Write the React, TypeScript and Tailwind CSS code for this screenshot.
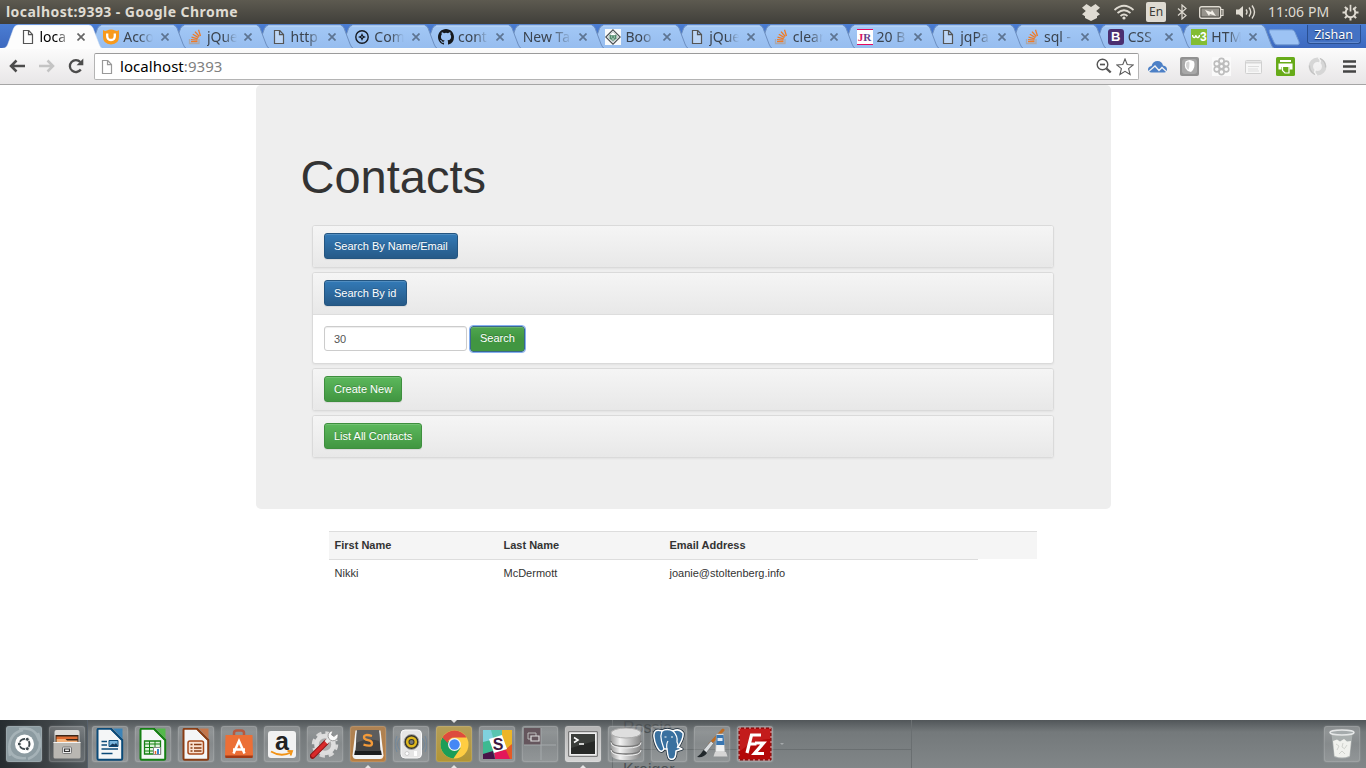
import React from "react";

type Kids = { children?: React.ReactNode };

const Svg = ({ w = 16, h = 16, vb, className = "", children }: Kids & { w?: number; h?: number; vb?: string; className?: string }) => (
  <svg width={w} height={h} viewBox={vb ?? `0 0 ${w} ${h}`} fill="none" className={`block shrink-0 ${className}`}>
    {children}
  </svg>
);

/* ---------- favicons ---------- */

const PageIcon = ({ color = "#555" }: { color?: string }) => (
  <Svg>
    <path d="M3.500 1.500h5.300l3.700 4v9h-9zM8.500 1.500v4.200h4" stroke={color} strokeWidth="1.200" fill="#ffffff55" />
  </Svg>
);
const UdemyIcon = () => (
  <Svg>
    <path d="M0 1q2 1.500 4 .5Q8-.5 12 1.500q2 1 4-.5v7q0 7-8 7.500Q0 15 0 8z" fill="#f89a1c" />
    <path d="M4.200 4.500V7q0 4 3.800 4t3.800-4V4.500" stroke="#fff" strokeWidth="2.300" />
  </Svg>
);
const StackIcon = () => (
  <Svg>
    <path d="M2.500 10v4.500h9.500V10" stroke="#a9a9ae" strokeWidth="1.300" />
    <path d="M4 12.700h6.500M4 10.600l6.500.5M4.500 8.100l6.300 1.700M5.800 5.300l5.700 3.300M8 2.600l4.300 4.900M11.500.8l2 6.200" stroke="#ee7b28" strokeWidth="1.300" />
  </Svg>
);
const CompassIcon = () => (
  <Svg>
    <circle cx="8" cy="8" r="6.200" stroke="#151a22" strokeWidth="1.400" />
    <path d="M8 4l1.200 2.800L12 8 9.200 9.200 8 12 6.800 9.200 4 8l2.800-1.200z" fill="#151a22" />
    <circle cx="8" cy="8" r=".8" fill="#9cc2f2" />
  </Svg>
);
const GithubIcon = () => (
  <Svg>
    <path
      fill="#16191d"
      d="M8 0C3.580 0 0 3.580 0 8c0 3.540 2.290 6.530 5.470 7.590.4.070.55-.17.55-.38v-1.490c-2.010.37-2.530-.49-2.690-.94-.09-.23-.48-.94-.82-1.130-.28-.15-.68-.52-.01-.53.63-.01 1.080.58 1.230.82.72 1.210 1.870.87 2.330.66.07-.52.28-.87.51-1.070-1.780-.2-3.640-.89-3.640-3.950 0-.87.31-1.590.82-2.150-.08-.2-.36-1.020.08-2.120 0 0 .67-.21 2.200.82a7.600 7.600 0 0 1 4 0c1.530-1.040 2.200-.82 2.200-.82.44 1.100.16 1.920.08 2.120.51.56.82 1.270.82 2.150 0 3.070-1.870 3.750-3.650 3.950.29.25.54.73.54 1.480v2.200c0 .21.15.46.55.38A8 8 0 0 0 16 8c0-4.420-3.580-8-8-8z"
    />
  </Svg>
);
const DiamondIcon = () => (
  <Svg>
    <path d="M0 0h16v16H0z" fill="#f7f9fa" />
    <path d="M8 .8L15.200 8 8 15.200.8 8z" fill="#fff" stroke="#4b5054" strokeWidth="1.200" />
    <path d="M8 2.800L13.200 8 8 13.200 2.800 8z" stroke="#9aa" strokeWidth=".6" />
    <path d="M4.500 5.500l1.500.8h4l1.500-.8v4L8 12 4.500 9.500z" fill="#4f8a6c" />
    <path d="M6 8h1.200M8.800 8H10M6.800 10h2.400" stroke="#fff" strokeWidth=".8" />
  </Svg>
);
const JRIcon = () => (
  <span className="flex h-4 w-4 items-center justify-center border-y border-[#e5095f] bg-white pt-[1px] font-['Liberation_Serif',serif] text-[11px] leading-none font-bold">
    <span className="text-[#e0115f]">J</span>
    <span className="text-[#65418b]">R</span>
  </span>
);
const BootstrapIcon = () => (
  <span className="flex h-4 w-4 items-center justify-center rounded-[3px] bg-[#4b2e6f] font-['Liberation_Sans',sans-serif] text-[13px] leading-none font-bold text-white">B</span>
);
const W3Icon = () => (
  <span className="flex h-4 w-4 items-center justify-center bg-[#83bd34] font-['Liberation_Sans',sans-serif] text-[12px] leading-none font-bold text-white">
    <Svg w={8} h={5}>
      <path d="M.5 1q.5 3 2 2.500T4 1q.5 3 2 2.500T7.500 1" stroke="#fff" strokeWidth="1.400" />
    </Svg>
    3
  </span>
);

/* ---------- tabs ---------- */

const tabs: { label: string; icon?: React.ReactNode }[] = [
  { label: "loca", icon: <PageIcon /> },
  { label: "Acco", icon: <UdemyIcon /> },
  { label: "jQue", icon: <StackIcon /> },
  { label: "http", icon: <PageIcon /> },
  { label: "Com", icon: <CompassIcon /> },
  { label: "cont", icon: <GithubIcon /> },
  { label: "New Ta" },
  { label: "Boo", icon: <DiamondIcon /> },
  { label: "jQue", icon: <PageIcon /> },
  { label: "clear", icon: <StackIcon /> },
  { label: "20 B", icon: <JRIcon /> },
  { label: "jqPa", icon: <PageIcon /> },
  { label: "sql -", icon: <StackIcon /> },
  { label: "CSS", icon: <BootstrapIcon /> },
  { label: "HTM", icon: <W3Icon /> },
];

const Tab = ({ label, icon, active, z }: { label: string; icon?: React.ReactNode; active: boolean; z: number }) => (
  <div className="relative -mr-[16.3px] h-[24px] w-[100px] shrink-0" style={{ zIndex: z }}>
    <svg width="100" height="25" viewBox="0 0 100 25" className="absolute inset-0">
      <defs>
        <linearGradient id="tabFill" x1="0" y1="0" x2="0" y2="1">
          <stop offset="0" stopColor="#a3c8f6" />
          <stop offset="1" stopColor="#96bdef" />
        </linearGradient>
      </defs>
      <path
        d="M0 24.500Q4 24.500 5.500 21L11.500 4.500Q13 1 16 1H87Q89.500 1 91 4L97 20Q98.500 24.500 101 24.500"
        fill={active ? "#fdfdfd" : "url(#tabFill)"}
        stroke={active ? "#dfe8f5" : "#6d8fc0"}
        strokeWidth={active ? 0.5 : 1}
      />
      {!active && <path d="M15 2H88" stroke="#c1dbfb" />}
    </svg>
    <div className={`relative flex h-full items-center pt-[1px] ${icon ? "pl-[17.500px]" : "pl-[18.500px]"}`}>
      {icon && <div className="mr-[4px]">{icon}</div>}
      <div
        className={`font-['Noto_Sans',sans-serif] text-[14px] leading-[20px] whitespace-nowrap [mask-image:linear-gradient(to_right,black_55%,transparent)] ${icon ? "w-[30px]" : "w-[49px]"} ${active ? "text-black" : "text-[#3b444f]"}`}
      >
        {label}
      </div>
      <Svg w={8} h={8} className={icon ? "ml-[7.500px]" : "ml-[7px]"}>
        <path d="M.5.5l7 7M7.500.5l-7 7" stroke={active ? "#666" : "#5d7492"} strokeWidth="1.700" />
      </Svg>
    </div>
  </div>
);

/* ---------- title bar ---------- */

const TitleBar = () => (
  <div className="flex h-[24px] shrink-0 items-center bg-linear-to-b from-[#5d5a50] to-[#403f3a] pl-[6px] font-['Noto_Sans',sans-serif] text-[#dfdbd2]">
    <div className="text-[14px] leading-[20px] font-bold tracking-[0.44px] whitespace-nowrap">localhost:9393 - Google Chrome</div>
    <div className="ml-auto flex items-center pr-[7px]">
      <Svg w={18} h={17}>
        <path d="M4.500 0L9 3 13.500 0 18 3.800 14.200 7 18 10.200l-3 2V14L9 17l-6-3v-1.800l-3-2L3.800 7 0 3.800z" fill="#dfdbd2" />
      </Svg>
      <Svg w={22} h={16} className="ml-[13px]">
        <path d="M1.500 6Q11-2.500 20.500 6M4.500 9Q11 3.500 17.500 9M7.500 12Q11 9 14.500 12" stroke="#dfdbd2" strokeWidth="1.700" />
        <circle cx="11" cy="14" r="1.600" fill="#dfdbd2" />
      </Svg>
      <div className="ml-[11px] flex h-5 w-5 items-center justify-center rounded-[2px] bg-[#dfdbd2] text-[12px] leading-none text-[#3c3b37]">En</div>
      <Svg w={10} h={16} className="ml-[11px]">
        <path d="M1 4.500l8 7L5 15V1l4 3.500-8 7" stroke="#dfdbd2" strokeWidth="1.200" />
      </Svg>
      <Svg w={25} h={13} className="ml-[12px]">
        <rect x=".7" y=".7" width="21" height="11.600" rx="2" stroke="#dfdbd2" strokeWidth="1.400" />
        <path d="M2.500 2.500h17.500v8H2.500z" fill="#96938b" />
        <path d="M22 3.500h2v6h-2" stroke="#dfdbd2" strokeWidth="1.200" />
        <path d="M6 4l6 2 1-2 4 6-6-2-1 2z" fill="#f3f0e8" />
      </Svg>
      <Svg w={21} h={16} className="ml-[11px]">
        <path d="M1 5.500h3L8 2v12l-4-3.500H1z" fill="#dfdbd2" />
        <path d="M11 5.500q2 2.500 0 5M14 3.500q3.500 4.500 0 9M17 1.500q5 6.500 0 13" stroke="#dfdbd2" strokeWidth="1.400" />
      </Svg>
      <div className="ml-[12px] w-[62px] text-[14px] leading-[20px] tracking-[0.08px] whitespace-nowrap">11:06 PM</div>
      <Svg w={17} h={17} className="ml-[12px]">
        <path d="M6 4.400a4.800 4.800 0 1 0 5 0" stroke="#dfdbd2" strokeWidth="2" />
        <path d="M8.500.8v6.700" stroke="#dfdbd2" strokeWidth="1.700" />
        <path d="M.5 8.500H4M13 8.500h3.500M8.500 13v3.500M2.900 2.900l2.300 2.300M14.100 2.900l-2.300 2.300M2.900 14.100l2.300-2.300M14.100 14.100l-2.300-2.300" stroke="#dfdbd2" strokeWidth="2" />
      </Svg>
    </div>
  </div>
);

const TabStrip = () => (
  <div className="flex h-[24px] shrink-0 overflow-hidden bg-linear-to-b from-[#4a7dd3] to-[#3d69bf] pl-[2px]">
    {tabs.map((t, i) => (
      <Tab key={i} label={t.label} icon={t.icon} active={i === 0} z={30 - i} />
    ))}
    <Svg w={33} h={17} className="mt-[5px] ml-[10px]">
      <path d="M2 .8h22q2 0 3 2.500l4 9.500q1 3-1.500 3H9q-2 0-3-2.500L1.500 3.500Q.5.800 2 .8z" fill="#9dc3f4" stroke="#6f97d1" />
    </Svg>
    <div className="mt-[1px] ml-[6px] flex h-[19px] w-[54px] items-center justify-center rounded-b-[3px] border border-t-0 border-[#294f91] bg-[#4472c4] pt-[3px] font-['Noto_Sans',sans-serif] text-[12.5px] leading-none text-white shadow-[inset_0_-1px_0_#6089d0] [text-shadow:0_1px_1px_#152d5a]">
      Zishan
    </div>
  </div>
);

/* ---------- toolbar ---------- */

const Toolbar = () => (
  <div className="flex h-[37px] shrink-0 items-center border-t border-b border-t-[#fdfdfd] border-b-[#a5a5a5] bg-linear-to-b from-[#fbfbfb] to-[#e8e6e7] pl-[9px]">
    <Svg w={17} h={14} className="mb-[1px]">
      <path d="M16 7H2.500M7.500 1.500L2 7l5.500 5.500" stroke="#4c4c4c" strokeWidth="2.500" />
    </Svg>
    <Svg w={16} h={14} className="mb-[1px] ml-[13px]">
      <path d="M0 7h13M8.500 1.500L14 7l-5.500 5.500" stroke="#c4c4c4" strokeWidth="2.500" />
    </Svg>
    <Svg w={16} h={16} className="mb-[1px] ml-[13px]">
      <path d="M12.800 11.500a6 6 0 1 1-.5-7.500" stroke="#4c4c4c" strokeWidth="2.300" />
      <path d="M15.300.5v6.700H8.600z" fill="#4c4c4c" />
    </Svg>
    <div className="ml-[10px] flex h-[27px] w-[1045px] items-center rounded-[2px] border border-[#b4b4b4] border-t-[#9b9b9b] bg-white pl-[4px]">
      <PageIcon color="#999" />
      <div className="-mt-[2px] ml-[5px] font-['Noto_Sans',sans-serif] text-[15px] leading-[22px] tracking-[0.05px] whitespace-nowrap text-[#808080]">
        <span className="text-black">localhost</span>:9393
      </div>
      <Svg w={16} h={16} className="mb-[2px] ml-auto">
        <circle cx="6.500" cy="6.500" r="5.300" stroke="#555" strokeWidth="1.400" />
        <path d="M4 6.500h5" stroke="#555" strokeWidth="1.700" />
        <path d="M10.500 10.500l4.200 4" stroke="#555" strokeWidth="2.400" />
      </Svg>
      <Svg w={18} h={18} className="mr-[4px] ml-[4px]">
        <path d="M9 1l2.200 5.500 6 .4-4.600 3.800 1.500 5.800L9 13.300l-5.100 3.200 1.500-5.800L.8 6.900l6-.4z" stroke="#5a5a5a" strokeWidth="1.100" />
      </Svg>
    </div>
    <Svg w={19} h={14} className="ml-[9px]">
      <path d="M3.500 12.500Q0 12.500 0 9.500T3.500 6Q5 1 9.500 1T15 5.500Q19 6 19 9.500t-3.500 3z" fill="#4d80c6" />
      <path d="M0 12l7-6 4 4.500L14 7.500l5 4.500" stroke="#f2f2f2" strokeWidth="1.300" />
    </Svg>
    <Svg w={19} h={19} className="ml-[13px]">
      <rect width="19" height="19" rx="2" fill="#919191" />
      <rect x="2" y="2" width="15" height="15" rx="3" fill="#a8a8a8" />
      <path d="M5.500 4.500q4-3 8.500 0 2 6-3 10.500Q2.500 13 5.500 4.500z" fill="#fff" />
      <path d="M6.500 5.500q3-2 3 .5 0 4-1 7Q5 10 6.500 5.500z" fill="#d4d4d4" />
    </Svg>
    <Svg w={19} h={19} className="ml-[13px]">
      <path d="M0 0h19v19H0z" fill="#fafafa" />
      <g stroke="#bdbdbd" strokeWidth="1.600">
        <circle cx="9.500" cy="9.500" r="2.200" />
        <circle cx="9.500" cy="4" r="2.600" />
        <circle cx="14.200" cy="6.700" r="2.600" />
        <circle cx="14.200" cy="12.300" r="2.600" />
        <circle cx="9.500" cy="15" r="2.600" />
        <circle cx="4.800" cy="12.300" r="2.600" />
        <circle cx="4.800" cy="6.700" r="2.600" />
      </g>
    </Svg>
    <Svg w={17} h={14} className="ml-[14px]">
      <rect x=".5" y=".5" width="16" height="13" rx="1" fill="#f7f7f7" stroke="#d0d0d0" />
      <path d="M1 2.500h15" stroke="#d7d7d7" strokeWidth="2" />
      <path d="M3 6.500h11M3 9h10M3 11h11" stroke="#ddd" />
    </Svg>
    <Svg w={19} h={19} className="ml-[14px]">
      <rect width="19" height="19" rx="1.500" fill="#67ab19" />
      <path d="M4 3h11v2H4zM2.500 6.500h14v6h-3V10h-8v2.500h-3z" fill="#fff" />
      <path d="M6.500 9.500h6.500V16H9l-2.500-2.500z" fill="#67ab19" stroke="#fff" strokeWidth="1.200" />
    </Svg>
    <Svg w={19} h={19} className="ml-[13px]">
      <circle cx="9.500" cy="9.500" r="6.700" stroke="#d6d6d6" strokeWidth="4.500" />
      <path d="M10 .5q4 3 1 6.500M9 18.500q-4-3-1-6.500" stroke="#f4f4f4" strokeWidth="1.500" />
      <path d="M12 1.500q6 3 5.500 9M7 17.500q-5.500-3-5.500-9" stroke="#c2c2c2" strokeWidth="1.200" />
    </Svg>
    <Svg w={13} h={13} className="ml-[16px]">
      <path d="M0 1.500h13M0 6.500h13M0 11.500h13" stroke="#444" strokeWidth="2.700" />
    </Svg>
  </div>
);

/* ---------- page ---------- */

const Btn = ({ kind, children }: Kids & { kind: "blue" | "green" | "focus" }) => (
  <button
    className={`h-[26px] shrink-0 rounded-[3px] border pr-[9.200px] pl-[9.500px] text-[11px] leading-[15px] whitespace-nowrap text-white shadow-[inset_0_1px_0_rgba(255,255,255,0.15),0_1px_1px_rgba(0,0,0,0.075)] [text-shadow:0_-1px_0_rgba(0,0,0,0.2)] ${
      kind === "blue"
        ? "border-[#245580] bg-linear-to-b from-[#337ab7] to-[#265a88]"
        : kind === "green"
          ? "border-[#3e8f3e] bg-linear-to-b from-[#5cb85c] to-[#419641]"
          : "border-[#38688d] bg-linear-to-b from-[#4fa64f] to-[#419641] to-50% pb-[2px] outline-1 outline-[#86b0f0]"
    }`}
  >
    {children}
  </button>
);

const Panel = ({ head, children }: Kids & { head: React.ReactNode }) => (
  <section className="overflow-hidden rounded-[3px] border border-[#dadada] bg-white shadow-[0_1px_2px_rgba(0,0,0,0.05)]">
    <div className="flex h-[41px] items-start bg-linear-to-b from-[#f5f5f5] to-[#e8e8e8] pt-[7px] pl-[11px]">{head}</div>
    {children}
  </section>
);

const Page = () => (
  <main className="flex min-h-0 flex-1 flex-col items-center bg-white font-['Liberation_Sans',Arial,sans-serif] text-[11px] text-[#333]">
    <div className="h-[424px] w-[855px] shrink-0 rounded-[5px] bg-[#eee] pt-[66px] pr-[57px] pl-[45px]">
      <h1 className="h-[52px] text-[47px] leading-[52px]">Contacts</h1>
      <div className="mt-[22px] ml-[11px] flex flex-col gap-[4px]">
        <Panel head={<Btn kind="blue">Search By Name/Email</Btn>} />
        <Panel head={<Btn kind="blue">Search By id</Btn>}>
          <div className="flex h-[49px] items-start gap-[3px] border-t border-[#ddd] pt-[11px] pl-[11px]">
            <input
              defaultValue="30"
              className="h-[25px] w-[143px] rounded-[3px] border border-[#ccc] bg-white px-[9.500px] pt-[1px] text-[11px] text-[#555] shadow-[inset_0_1px_1px_rgba(0,0,0,0.075)]"
            />
            <Btn kind="focus">Search</Btn>
          </div>
        </Panel>
        <Panel head={<Btn kind="green">Create New</Btn>} />
        <Panel head={<Btn kind="green">List All Contacts</Btn>} />
      </div>
    </div>
    <div className="mt-[22px] grid w-[708px] grid-cols-[169px_166px_314px_59px] leading-[15px]">
      {["First Name", "Last Name", "Email Address", ""].map((t, i) => (
        <div key={i} className={`border-t border-t-[#ddd] bg-[#f5f5f5] pt-[6px] pl-[5.500px] font-bold ${i < 3 ? "h-[29px] border-b border-b-[#ddd]" : "h-[28px]"}`}>
          {t}
        </div>
      ))}
      {["Nikki", "McDermott", "joanie@stoltenberg.info"].map((t) => (
        <div key={t} className="pt-[6px] pl-[5.500px]">
          {t}
        </div>
      ))}
    </div>
  </main>
);

/* ---------- dock ---------- */

const Doc = ({ c, light, children }: Kids & { c: string; light: string }) => (
  <Svg w={28} h={33}>
    <path d="M1.500 2q0-1.200 1.200-1.200H15L26.200 12v18.500q0 1.200-1.200 1.200H2.700q-1.200 0-1.200-1.200z" fill="#f4f6f7" stroke={c} strokeWidth="2" />
    <path d="M17 .5h9.500V11z" fill={light} />
    <path d="M15 1l11 11" stroke={c} strokeWidth="1.500" />
    {children}
  </Svg>
);

const Ubuntu = () => (
  <Svg w={34} h={34}>
    <path d="M3 29Q-1 7 16 3M31 6Q38 25 21 32M12 2Q29-1 32 14M2 19q2 14 17 12" stroke="#d3dce0" strokeWidth="2.500" opacity=".35" />
    <circle cx="17.500" cy="17" r="9.500" fill="#fff" />
    <circle cx="17.500" cy="17" r="5" stroke="#3d474c" strokeWidth="2" />
    <g fill="#3d474c" stroke="#fff">
      <circle cx="12.300" cy="17" r="2" />
      <circle cx="20.300" cy="12.300" r="2" />
      <circle cx="20.300" cy="21.700" r="2" />
    </g>
  </Svg>
);
const Files = () => (
  <Svg w={28} h={31}>
    <path d="M1.500 3q0-2 2-2h21q2 0 2 2v12h-25z" fill="#dddbd7" />
    <path d="M2.500 6h23v9h-23z" fill="#3c2618" />
    <path d="M3.500 7.500h21v2.500h-21z" fill="#df6c31" />
    <path d="M3.500 10h9l1.500 1.500h10.500V15h-21z" fill="#f4b27a" />
    <path d="M.5 13h27v15q0 1.500-1.500 1.500H2Q.5 29.500.5 28z" fill="#b9b7b2" />
    <path d="M.5 13.500h27" stroke="#f2f2f2" />
    <rect x="9.500" y="18" width="9" height="6.500" rx="1" fill="#eee" stroke="#777" />
    <path d="M11.500 20h5v2.500h-5z" stroke="#333" strokeWidth="1.200" />
  </Svg>
);
const Writer = () => (
  <Doc c="#0b4a78" light="#3b83b8">
    <path d="M5.500 13.500h5.500M5.500 17h5.500M5.500 21H22M5.500 25.500h11" stroke="#0b4a78" strokeWidth="1.700" />
    <path d="M13 12.500h9v6h-9z" fill="#79b5dd" stroke="#0b4a78" />
    <path d="M13.500 18l3-2.500 2 1 1.500-1.500 2 3z" fill="#173a5a" />
  </Doc>
);
const Calc = () => (
  <Doc c="#148013" light="#54b94b">
    <path d="M5.500 13h16v13h-16z" fill="#dbf3d8" stroke="#148013" strokeWidth="1.300" />
    <path d="M5.500 16h16M5.500 19.500h16M5.500 23h16M10.500 13v13M16 13v13" stroke="#148013" />
    <path d="M14.500 19.500h7v7h-7z" fill="#fff" stroke="#888" />
    <path d="M16.500 26v-3" stroke="#e76b28" strokeWidth="1.500" />
    <path d="M19 26v-5" stroke="#257bc5" strokeWidth="1.800" />
  </Doc>
);
const Impress = () => (
  <Doc c="#893d14" light="#c5764a">
    <rect x="6" y="13" width="15.500" height="13" rx="2" fill="#f9e0cf" stroke="#a6481a" strokeWidth="1.500" />
    <path d="M8.500 16.500h2M8.500 20h2M8.500 23h2M12 16.500h7.500M12 20h7.500M12 23h7.500" stroke="#893d14" strokeWidth="1.600" />
  </Doc>
);
const Software = () => (
  <Svg w={28} h={30}>
    <path d="M9 10V4q0-2.500 3-2.500h4q3 0 3 2.500v6" stroke="#b9573c" strokeWidth="2.500" />
    <path d="M.5 6h27l.5 21H0z" fill="#ec6f36" />
    <path d="M0 26.500h28l-.5 2.500H.5z" fill="#a33b16" />
    <path d="M8.500 24.500L14 12l5.500 12.500M8 20.500h12" stroke="#fff" strokeWidth="2.500" />
  </Svg>
);
const Amazon = () => (
  <span className="flex h-[27px] w-[28px] flex-col items-center rounded-[3px] bg-[#f2f2f2] font-['Liberation_Sans',sans-serif] text-[25px] leading-[20px] font-bold text-[#222]">
    <span className="h-[19px]">a</span>
    <Svg w={26} h={7}>
      <path d="M2 1.500q10 6 20 1M18.500 1l4.500.2-1.500 4.300" stroke="#f29316" strokeWidth="1.900" />
    </Svg>
  </span>
);
const Settings = () => (
  <Svg w={30} h={30}>
    <circle cx="15" cy="15.500" r="11" stroke="#d8d8d8" strokeWidth="4.500" strokeDasharray="5 3.640" />
    <circle cx="15" cy="15.500" r="8.500" stroke="#dedede" strokeWidth="4.500" fill="#aaa" />
    <path d="M2.500 27L16 13.500" stroke="#8c1414" strokeWidth="5.500" strokeLinecap="round" />
    <path d="M3 26.500L16 13.500" stroke="#d92a2a" strokeWidth="3.800" strokeLinecap="round" />
    <path d="M16 13.500l4.500-4.500" stroke="#e8e8e8" strokeWidth="4" />
    <path d="M27.500 4.500a5 5 0 1 1-4.500-2.700l-1.500 4 2.500 1.700z" fill="#fafafa" stroke="#888" strokeWidth=".8" />
  </Svg>
);
const Sublime = () => (
  <Svg w={32} h={32}>
    <path d="M3.500 2.500h25l3 25Q31 31 28 31H4Q1 31 .5 27.500z" fill="#f3f3f3" />
    <path d="M3 22.500h26l.8 4.500H2.200z" fill="#1d1d1d" />
    <path d="M5 2h22l1.500 21h-25z" fill="#444" />
    <path d="M5 2h22l.8 11Q15 9 4.200 15z" fill="#5d5d5d" />
    <path d="M20 8q-8-2.500-8 1.300 0 2.200 4 2.900t4 3.200q0 3.600-8.500 1.300" stroke="#f39a39" strokeWidth="2.300" />
  </Svg>
);
const Speaker = () => (
  <Svg w={32} h={32}>
    <path d="M5 10Q0 16 5 22M2 8q-4 8 0 16M27 10q5 6 0 12M30 8q4 8 0 16" stroke="#6485a5" opacity=".6" />
    <rect x="6" y="2" width="20.500" height="28" rx="4" fill="#e6e6e6" stroke="#fafafa" />
    <circle cx="16.500" cy="14" r="7.500" fill="#37362f" stroke="#aaa" />
    <circle cx="16.500" cy="14" r="4.300" stroke="#dfb81d" strokeWidth="2.500" />
    <circle cx="16.500" cy="14" r="2" fill="#777" />
    <circle cx="12" cy="25.500" r="2" fill="#fff" stroke="#ccc" />
    <rect x="19" y="23" width="3" height="5" fill="#fff" />
  </Svg>
);
const ChromeLogo = () => (
  <Svg w={29} h={29}>
    <circle cx="14.500" cy="14.500" r="14" fill="#ffcd42" />
    <path d="M2.400 7.500a14 14 0 0 0 11 21L20.600 18 14.500 14.500z" fill="#1c9e58" />
    <path d="M2.400 7.500A14 14 0 0 1 26.600 7.500H14.500A7 7 0 0 0 7.700 13z" fill="#dd4b3e" />
    <circle cx="14.500" cy="14.500" r="6.500" fill="#f3f3f3" />
    <circle cx="14.500" cy="14.500" r="5.200" fill="#4487f5" />
  </Svg>
);
const Slack = () => (
  <Svg w={29} h={29}>
    <path d="M0 0h29v29H0z" fill="#3db991" />
    <path d="M0 0h19l-3 8L0 12z" fill="#7fd1de" />
    <path d="M8 0h11l3 8-11 3z" fill="#59c5b0" />
    <path d="M19 0h10v16l-6 3-4-11z" fill="#ecb527" />
    <path d="M29 14v15H18l-2-7 7-3z" fill="#e45a26" />
    <path d="M11 22l12-2 4 9H12z" fill="#e3175a" />
    <path d="M0 24l10-3 2 8H0z" fill="#48154a" />
    <path d="M6 9l13-4 5 14-13 4z" fill="#fff" />
    <text x="15" y="20" textAnchor="middle" fill="#3e1a40" fontSize="16" fontWeight="bold" fontFamily="Liberation Sans">S</text>
  </Svg>
);
const Workspaces = () => (
  <Svg w={34} h={34}>
    <path d="M1 1h17v17H1z" fill="#65565d" />
    <path d="M18 1v32M1 18h32" stroke="#a4a9ab" />
    <path d="M5 6h8v6H5z" stroke="#bbb" />
    <path d="M8 9h8v5H8z" fill="#65565d" stroke="#ddd" strokeWidth="1.200" />
  </Svg>
);
const Terminal = () => (
  <Svg w={30} h={26}>
    <path d="M.7.7h28.600v24.600H.7z" fill="#eee" stroke="#666" />
    <path d="M3 3h24v20H3z" fill="#272927" />
    <path d="M3 3h24v7L3 17z" fill="#3b3e3b" />
    <path d="M6 6.500l4 2.500-4 2.500M11 13h5" stroke="#fff" strokeWidth="1.500" />
  </Svg>
);
const Database = () => (
  <Svg w={32} h={34}>
    <defs>
      <linearGradient id="metal">
        <stop stopColor="#9b9b9b" />
        <stop offset=".3" stopColor="#f2f2f2" />
        <stop offset="1" stopColor="#858585" />
      </linearGradient>
    </defs>
    <path d="M1 6v21q0 6 15 6t15-6V6z" fill="url(#metal)" />
    <ellipse cx="16" cy="6" rx="15" ry="5" fill="#dedede" stroke="#aaa" />
    <path d="M1 14q0 5.500 15 5.500T31 14M1 21.500Q1 27 16 27t15-5.500" stroke="#777" strokeWidth="1.300" />
    <path d="M1 15.500Q1 21 16 21t15-5.500M1 23q0 5.500 15 5.500T31 23" stroke="#eee" />
  </Svg>
);
const Postgres = () => (
  <Svg w={34} h={33}>
    <g stroke="#1c2b38" strokeWidth="3" strokeLinejoin="round">
      <path d="M10 3Q1 0 2 9q1 8 5 13 3 3 5-1l3 0q1 10 3 10 6 2 6-8l6-2-4-2q6-9 5-14Q27 0 21 3 15 0 10 3z" />
    </g>
    <path d="M10 3Q1 0 2 9q1 8 5 13 3 3 5-1l3 0q1 10 3 10 6 2 6-8l6-2-4-2q6-9 5-14Q27 0 21 3 15 0 10 3z" fill="#39709f" stroke="#fff" strokeWidth="1.500" strokeLinejoin="round" />
    <path d="M10 3Q8 8 9.500 13t2.500 8M21 3q5 5 4 11 2 4 0 6M15 21q-1-5 1-8M12.500 9h2M21 9h-2" stroke="#fff" strokeWidth="1.200" />
  </Svg>
);
const Paint = () => (
  <Svg w={32} h={32}>
    <path d="M27 2L14 16" stroke="#bd6c24" strokeWidth="3" strokeLinecap="round" />
    <path d="M15 13l2.500 2.500-7 9-3-2.500z" fill="#d9dde0" stroke="#666" strokeWidth=".6" />
    <path d="M7.500 22l3.500 3q-3 5-10 4 3.500-2 6.500-7z" fill="#20272b" />
    <path d="M20.500 6h7l1.500 18h-9.500z" fill="#f0f1f1" stroke="#aaa" strokeWidth=".7" />
    <path d="M20.500 7h7l1 10h-8.300z" fill="#3976b1" />
    <path d="M21.500 10h5v3h-5z" fill="#dfe8f1" />
    <path d="M19 24h11l1.500 4.500h-14z" fill="#d5d5d5" />
  </Svg>
);
const FileZilla = () => (
  <Svg w={34} h={34}>
    <path d="M1 1h32v32H1z" fill="#b40808" stroke="#870c0c" />
    <path d="M1 1h32v32H1z" stroke="#e9b6b6" strokeDasharray="2 3" />
    <path d="M2 2h30v10Q17 12 2 24z" fill="#d13030" opacity=".5" />
    <path d="M9 26l4.500-18H23M11 17h7.500M17 16h8.500l-9 10.500H26" stroke="#fff" strokeWidth="3.200" />
  </Svg>
);
const Trash = () => (
  <Svg w={28} h={32}>
    <path d="M3.500 6h21L22 29q-8 3-16 0z" fill="#b6bcbb" opacity=".7" />
    <path d="M5 13l4-1.500 3 2 4-2.500 3 2.500 4-.5-1.500 15q-7.500 3-15 0z" fill="#f0f1ed" />
    <path d="M8 16l3 2-2 4M15 15l-1 4 3 2M19 17l-2 3M11 26l3-3 3 3" stroke="#d0d2cd" />
    <ellipse cx="14" cy="4.500" rx="12" ry="2.500" fill="#a5abac" stroke="#e5e7e7" strokeWidth="1.600" />
  </Svg>
);

const plain = "bg-linear-to-b from-white/25 via-white/10 to-white/15";
const apps: { icon: React.ReactNode; bg: string; up?: boolean; down?: boolean }[] = [
  { icon: <Ubuntu />, bg: "bg-[#8c9ba1]" },
  { icon: <Files />, bg: plain },
  { icon: <Writer />, bg: plain },
  { icon: <Calc />, bg: plain },
  { icon: <Impress />, bg: plain },
  { icon: <Software />, bg: plain },
  { icon: <Amazon />, bg: plain },
  { icon: <Settings />, bg: plain },
  { icon: <Sublime />, bg: "bg-linear-to-b from-[#ad8254] to-[#b77e42]", up: true },
  { icon: <Speaker />, bg: plain },
  { icon: <ChromeLogo />, bg: "bg-linear-to-b from-[#b49e58] to-[#b29533]", up: true, down: true },
  { icon: <Slack />, bg: plain },
  { icon: <Workspaces />, bg: plain },
  { icon: <Terminal />, bg: "bg-linear-to-b from-[#b5b5b5] to-[#d5d5d5]", up: true },
  { icon: <Database />, bg: plain },
  { icon: <Postgres />, bg: plain },
  { icon: <Paint />, bg: plain },
  { icon: <FileZilla />, bg: plain },
];

const Tile = ({ icon, bg, up, down }: (typeof apps)[number]) => (
  <div className={`relative flex h-[36px] w-[36px] shrink-0 items-center justify-center rounded-[3px] shadow-[0_0_2px_rgba(255,255,255,0.25),inset_0_0_0_1px_rgba(255,255,255,0.12)] ${bg}`}>
    {icon}
    {down && <span className="absolute -top-[6px] left-[15px] border-x-[3px] border-t-[3px] border-x-transparent border-t-[#e4e4e4]" />}
    {up && <span className="absolute -bottom-[6px] left-[15px] border-x-[3px] border-b-[3px] border-x-transparent border-b-[#e4e4e4]" />}
  </div>
);

const Dock = () => (
  <div className="relative flex h-[48px] shrink-0 gap-[7px] overflow-hidden bg-linear-to-b from-[#515659] via-[#74797b] via-25% to-[#818688] pt-[6px] pl-[6px]">
    <div className="absolute top-0 left-0 h-full w-[88px] border-r border-[#56606b] bg-linear-to-r from-[#272d31] via-[#3b4043] to-[#50575b]" />
    <div className="absolute top-0 left-[612px] h-full w-[300px] border-x border-[#6a6f71] font-['Liberation_Sans',sans-serif] text-[16px] leading-[15px] text-[#4b5053]">
      <div className="h-[30px] border-b border-[#6a6f71] pl-[10px]">Rossie</div>
      <div className="pt-[12px] pl-[10px]">Kreiger</div>
    </div>
    {apps.map((a, i) => (
      <Tile key={i} {...a} />
    ))}
    <div className="mt-[17px] h-0 w-0 border-x-2 border-t-2 border-x-transparent border-t-[#a5a9ab]" />
    <div className="mr-[6px] ml-auto">
      <Tile icon={<Trash />} bg={plain} />
    </div>
  </div>
);

export default function App() {
  return (
    <div className="flex h-[768px] w-[1366px] flex-col overflow-hidden bg-white">
      <TitleBar />
      <TabStrip />
      <Toolbar />
      <Page />
      <Dock />
    </div>
  );
}
